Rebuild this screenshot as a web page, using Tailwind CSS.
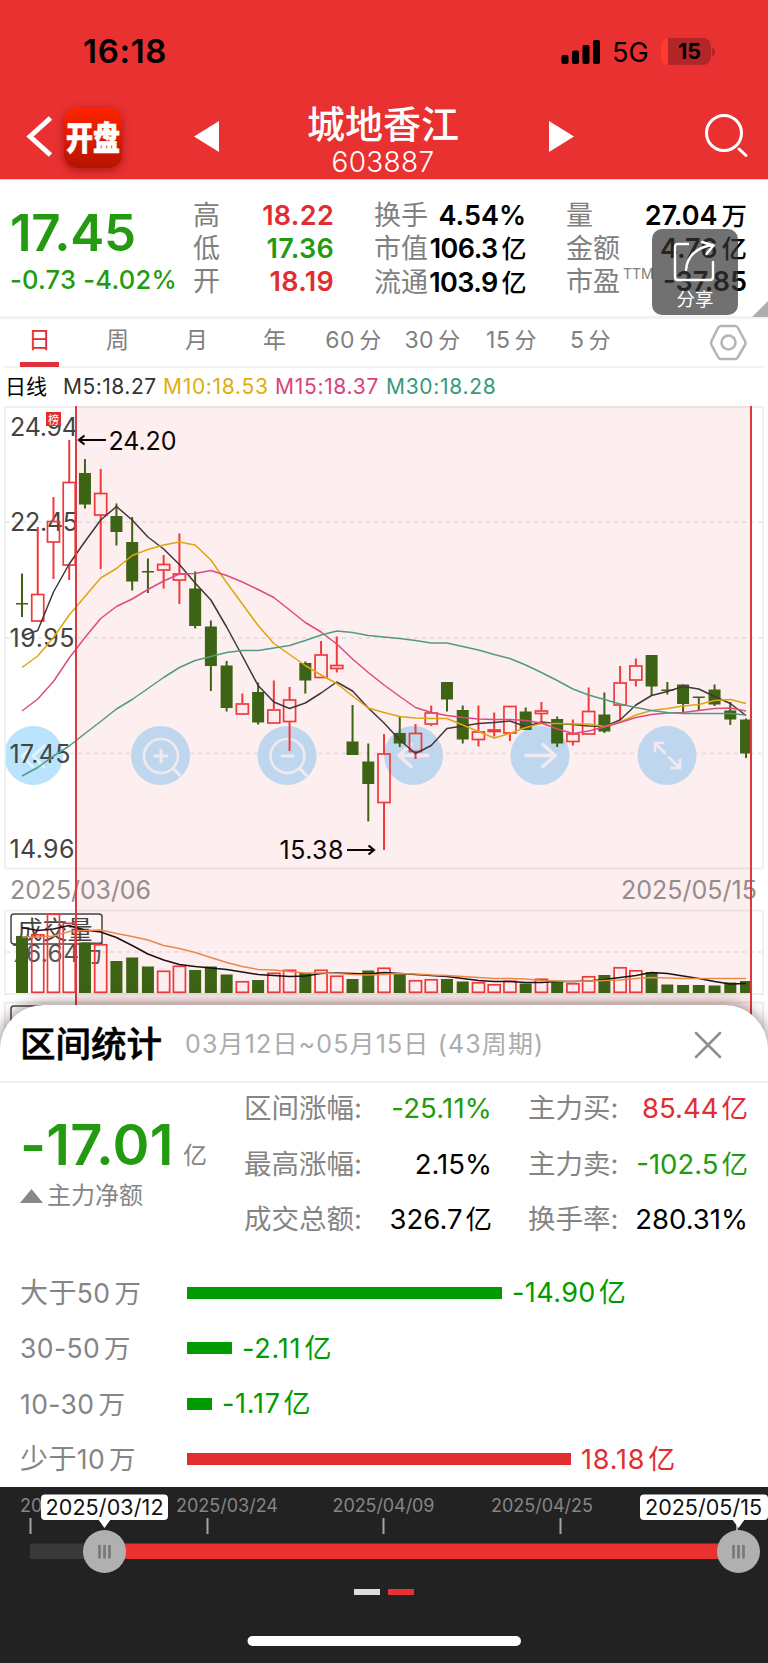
<!DOCTYPE html>
<html lang="zh-CN">
<head>
<meta charset="utf-8">
<title>城地香江 603887</title>
<script src="https://cdn.jsdelivr.net/npm/@tailwindcss/browser@4"></script>
</head>
<body class="w-[768px] h-[1663px] overflow-hidden bg-white font-['Inter','Noto_Sans_CJK_SC',sans-serif] leading-none whitespace-nowrap">
<div class="relative flex h-[1663px] w-[768px] flex-col overflow-hidden">

<!-- header -->
<header class="h-[180px] shrink-0 border-b border-[#f9c9c9] bg-[#e93131]">
  <div class="flex h-[97px] items-start justify-between pl-[83px] pr-[53px]">
    <div class="pt-[36px] text-[33px] font-semibold leading-[31px] tracking-[0.700px] text-black">16:18</div>
    <div class="flex items-center pt-[37px]">
      <svg width="40" height="28" viewBox="0 0 40 28"><g fill="#000"><rect x="1.500" y="17" width="7" height="9" rx="2"/><rect x="12" y="12.500" width="7" height="13.500" rx="2"/><rect x="22.500" y="7" width="7" height="19" rx="2"/><rect x="33" y="2" width="7" height="24" rx="2"/></g></svg>
      <div class="ml-[12px] w-[49px] pt-[2px] text-[27px]">5G</div>
      <div class="flex h-[27px] w-[50px] items-center justify-center overflow-hidden rounded-[8px] bg-[linear-gradient(90deg,#ff3a30_0_7px,#b22627_7px)] pl-[7px] text-[21.500px] font-bold">15</div>
      <div class="ml-[1px] h-[8px] w-[3px] rounded-r-full bg-[#b22627]"></div>
    </div>
  </div>
  <div class="flex h-[82px] items-start">
    <svg class="ml-[24px] mt-[17px]" width="30" height="44" viewBox="0 0 30 44" fill="none" stroke="#fff" stroke-width="5"><path d="M26.500 4L6 22.500L26.500 41"/></svg>
    <div class="ml-[10px] mt-[11px] flex h-[60px] w-[58px] items-center justify-center rounded-[13px] bg-linear-to-b from-[#ff2400] to-[#b41500] shadow-[0_2px_8px_rgba(110,0,0,0.5)]"><span class="scale-y-120 text-[27px] font-black text-white [-webkit-text-stroke:0.6px_white]">开盘</span></div>
    <svg class="ml-[71px] mt-[24px]" width="27" height="31" viewBox="0 0 27 31"><path fill="#fff" d="M1 15.500L26 0V31Z"/></svg>
    <div class="ml-[78px] mt-[8px] flex w-[170px] flex-col items-center text-white">
      <div class="text-[38px] font-medium leading-[38px]">城地香江</div>
      <div class="mt-[4px] text-[28px] leading-[30px] tracking-[0.300px] font-light">603887</div>
    </div>
    <svg class="ml-[80px] mt-[24px]" width="27" height="31" viewBox="0 0 27 31"><path fill="#fff" d="M26 15.500L1 0V31Z"/></svg>
    <svg class="ml-[129px] mt-[15px]" width="46" height="46" viewBox="0 0 46 46" fill="none" stroke="#fff" stroke-width="3" stroke-linecap="round"><circle cx="20" cy="21" r="17.500"/><path d="M35 37L42 43.500"/></svg>
  </div>
</header>

<!-- quote -->
<section class="relative flex h-[136px] shrink-0 pl-[10px] pt-[19px]">
  <div class="w-[183px] text-[#249a10]">
    <div class="mt-[9px] text-[51px] font-semibold leading-[50px] tracking-[-0.200px]">17.45</div>
    <div class="mt-[9px] text-[25.500px] font-medium leading-[26px] tracking-[0.250px]">-0.73 -4.02%</div>
  </div>
  <div class="grid w-[141px] grid-cols-[1fr_auto] content-start text-[27px] leading-[33px] text-[#808080]">
    <span>高</span><b class="text-right font-semibold text-[#e12d2f] tracking-[0.300px]">18.22</b>
    <span>低</span><b class="text-right font-semibold text-[#249a10] tracking-[0.300px]">17.36</b>
    <span>开</span><b class="text-right font-semibold text-[#e12d2f] tracking-[0.300px]">18.19</b>
  </div>
  <div class="ml-[40px] grid w-[152px] grid-cols-[1fr_auto] content-start text-[27px] leading-[33px] text-[#808080]">
    <span class="w-0">换手</span><b class="text-right font-semibold text-black">4.54%</b>
    <span class="w-0">市值</span><b class="text-right font-semibold text-black tracking-[-0.600px]">106.3<i class="pl-[4px] text-[25px] font-medium not-italic">亿</i></b>
    <span class="w-0">流通</span><b class="text-right font-semibold text-black tracking-[-0.600px]">103.9<i class="pl-[4px] text-[25px] font-medium not-italic">亿</i></b>
  </div>
  <div class="ml-[40px] grid w-[181px] grid-cols-[1fr_auto] content-start text-[27px] leading-[33px] text-[#808080]">
    <span class="w-0">量</span><b class="text-right font-semibold text-black">27.04<i class="pl-[4px] text-[25.500px] font-medium not-italic">万</i></b>
    <span class="w-0">金额</span><b class="text-right font-semibold text-black">4.76<i class="pl-[4px] text-[25.500px] font-medium not-italic">亿</i></b>
    <span class="flex w-0 items-start">市盈<small class="pl-[3px] pt-[2px] text-[14px] leading-[14px]">TTM</small></span><b class="text-right font-semibold text-black">-37.85</b>
  </div>
  <div class="absolute left-[652px] top-[49px] flex h-[86px] w-[86px] flex-col items-center rounded-[10px] bg-[#353535]/70 pt-[10px] text-white">
    <svg width="44" height="44" viewBox="0 0 44 44" fill="none" stroke="#fff" stroke-width="2.400" stroke-linecap="round" stroke-linejoin="round"><path d="M15 5H5Q2 5 2 8V38Q2 41 5 41H37Q40 41 40 38V23"/><path d="M13 31C14 17 24 8 40 6M29 3L40.500 6.500L33.500 15"/></svg>
    <div class="mt-[7px] text-[18.500px]">分享</div>
  </div>
  <svg class="absolute right-0 bottom-[-1px]" width="16" height="16" viewBox="0 0 16 16"><path d="M0 16L16 0V16Z" fill="#adadad"/></svg>
</section>
<div class="h-[3px] shrink-0 bg-[#f2f2f2]"></div>

<!-- period tabs -->
<nav class="mx-[4px] flex h-[49px] shrink-0 items-start border-b-2 border-[#f1f1f1] text-[23px] leading-[43px] text-[#808080]">
  <div class="ml-[16px] flex h-[48px] w-[39px] flex-col items-center text-[#e12d2f]"><span class="h-[43px]">日</span><i class="h-[5px] w-full bg-[#dd323b]"></i></div>
  <div class="ml-[39px] w-[39px] text-center">周</div>
  <div class="ml-[40px] w-[39px] text-center">月</div>
  <div class="ml-[39px] w-[39px] text-center">年</div>
  <div class="ml-[20px] w-[79px] text-center tracking-[0.500px]">60<span class="pl-[4px] text-[22px]">分</span></div>
  <div class="w-[79px] text-center tracking-[0.500px]">30<span class="pl-[4px] text-[22px]">分</span></div>
  <div class="w-[79px] text-center tracking-[0.500px]">15<span class="pl-[4px] text-[22px]">分</span></div>
  <div class="w-[79px] text-center tracking-[0.500px]">5<span class="pl-[4px] text-[22px]">分</span></div>
  <svg class="ml-[78px] mt-[4px]" width="40" height="40" viewBox="0 0 40 40" fill="none" stroke="#b5b5b5" stroke-width="2.600" stroke-linejoin="round"><path d="M13 3H27Q29 3 30 5L37 18Q38 20 37 22L30 34Q29 36 27 36H13Q11 36 10 34L3.500 22Q2.500 20 3.500 18L10 5Q11 3 13 3Z"/><circle cx="20.500" cy="19.500" r="7"/></svg>
</nav>

<!-- moving averages -->
<div class="flex h-[32px] shrink-0 items-center pl-[5px] pt-[4px] text-[21px] tracking-[0.700px]">
  <span class="w-[58px] text-[21px] text-black tracking-normal">日线</span>
  <span class="w-[100px] text-[#333] tracking-[0.500px]">M5:18.27</span>
  <span class="w-[112px] text-[#dfae10]">M10:18.53</span>
  <span class="w-[111px] text-[#d9437e]">M15:18.37</span>
  <span class="text-[#37997a]">M30:18.28</span>
</div>

<!-- chart -->
<svg id="chart" class="shrink-0" width="768" height="640" viewBox="0 400 768 640" fill="none">
  <rect x="76" y="406" width="675" height="640" fill="#fdeeef"/>
  <g stroke="#000" stroke-opacity=".06" stroke-width="2"><path d="M5 407H763V868.500H5ZM5 910.500H763V994H5ZM5 1040V1002.500H763V1040"/><path stroke-dasharray="4 4" stroke-opacity=".07" d="M6 522H762M6 638H762M6 753.500H762M6 952H762"/></g>
  <g id="buttons">
    <path fill="#bae3fd" d="M6 745A29.500 29.500 0 1 1 6 766Z"/>
    <g fill="#bfd7ee"><circle cx="160.500" cy="755.500" r="29.500"/><circle cx="287" cy="755.500" r="29.500"/><circle cx="413.500" cy="755.500" r="29.500"/><circle cx="540" cy="755.500" r="29.500"/><circle cx="667" cy="755.500" r="29.500"/></g>
    <g stroke="#f1e9ef" stroke-width="2.600" stroke-linecap="round">
      <path d="M33 746L22 756L33 767M44 746L33 756L44 767" stroke="#e4f4ff"/>
      <circle cx="161" cy="756" r="17"/><path d="M155 756H167M161 750V762" stroke-width="3"/><path d="M173.500 769L180 775.500" stroke-width="3"/>
      <circle cx="287.500" cy="756" r="17"/><path d="M282 756H293M300.500 769L306.500 775.500" stroke-width="3"/>
      <path d="M428 755.500H399M411 744.500L399 755.500L411 766.500" stroke-width="3.500"/>
      <path d="M526 755.500H555M543 744.500L555 755.500L543 766.500" stroke-width="3.500"/>
      <path d="M665 753L655 743M663 743H655V751M669 757.500L680 768M680 759.500V768H671.500"/>
    </g>
  </g>
  <g font-size="25" fill="#444">
    <text x="10" y="436" textLength="68">24.94</text><text x="10" y="531" textLength="68">22.45</text><text x="9.500" y="647" textLength="65">19.95</text><text x="9.500" y="763" textLength="61">17.45</text><text x="9.500" y="857.500" textLength="65">14.96</text>
  </g>
  <g font-size="25" fill="#958c8e"><text x="10" y="899" textLength="141">2025/03/06</text><text x="621" y="899" textLength="136">2025/05/15</text></g>
  <text x="12" y="962" font-size="24.500" fill="#555" textLength="92">76.64万</text>
  <rect x="11" y="914" width="91" height="30" rx="3" fill="#fff" fill-opacity=".35" stroke="#444" stroke-width="1.500"/>
  <text x="17.500" y="938.500" font-size="25" fill="#444">成交量</text>
  <rect x="11" y="1006" width="91" height="30" rx="3" stroke="#444" stroke-width="1.500"/>
  <g id="candles" stroke-width="2"></g>
  <g id="averages" stroke-width="1.500" stroke-linejoin="round"></g>
  <rect x="46" y="412" width="15" height="14" fill="#e12d2f"/><text x="48" y="423.500" font-size="11" fill="#fff">榜</text>
  <path d="M76 406V1040M751 406V1040" stroke="#e0393d" stroke-width="2"/>
  <g font-size="25" fill="#0b0405"><text x="108.500" y="449.500" textLength="68">24.20</text><text x="279.500" y="859" textLength="64">15.38</text></g>
  <path d="M106 440H80M84.500 435.500L79 440L84.500 444.500M347 850H373M368.500 845.500L374 850L368.500 854.500" stroke="#0b0405" stroke-width="2.200"/>
</svg>

<!-- range statistics sheet -->
<section class="relative -mt-[35px] flex h-[482px] shrink-0 flex-col rounded-t-[44px] bg-white shadow-[0_0_16px_rgba(40,0,0,0.55)]">
  <div class="flex h-[78px] shrink-0 items-center border-b-2 border-[#efefef] pl-[20px] pr-[46px] pt-[3px]">
    <h2 class="text-[35.500px] font-medium [-webkit-text-stroke:0.6px_black]">区间统计</h2>
    <div class="ml-[23px] flex-1 text-[25px] tracking-[1.150px] text-[#acacac]">03月12日~05月15日 (43周期)</div>
    <svg width="28" height="28" viewBox="0 0 28 28" stroke="#8f8f8f" stroke-width="2.600" stroke-linecap="round"><path d="M2 2L26 26M26 2L2 26"/></svg>
  </div>
  <div class="flex h-[166px] shrink-0">
    <div class="w-[244px] pl-[20px] text-[24px] text-[#858585]">
      <div class="mt-[34px] flex h-[56px] items-baseline"><span class="w-[163px] text-[56px] font-semibold leading-[56px] tracking-[0.300px] text-[#249a10]">-17.01</span><span class="relative top-[-1px]">亿</span></div>
      <div class="mt-[10px] flex items-center leading-[26px]"><svg width="23" height="14" viewBox="0 0 23 14"><path fill="#888" d="M0 14L11.500 0L23 14Z"/></svg><span class="ml-[4px]">主力净额</span></div>
    </div>
    <div class="-mt-[2px] grid w-[248px] grid-cols-[1fr_auto] content-start text-[27.500px] leading-[55.500px] text-[#858585]">
      <span>区间涨幅:</span><span class="text-right text-[#249a10] tracking-[0.200px]">-25.11%</span>
      <span>最高涨幅:</span><span class="text-right text-black">2.15%</span>
      <span>成交总额:</span><span class="text-right text-black">326.7<i class="pl-[3px] text-[26.500px] not-italic">亿</i></span>
    </div>
    <div class="-mt-[2px] ml-[36px] grid w-[220px] grid-cols-[1fr_auto] content-start text-[27.500px] leading-[55.500px] text-[#858585]">
      <span>主力买:</span><span class="text-right text-[#e12d2f]">85.44<i class="pl-[3px] text-[26.500px] not-italic">亿</i></span>
      <span>主力卖:</span><span class="text-right text-[#249a10]">-102.5<i class="pl-[3px] text-[26.500px] not-italic">亿</i></span>
      <span>换手率:</span><span class="text-right text-black">280.31%</span>
    </div>
  </div>
  <div class="mt-[16px] flex flex-col pl-[20px] text-[26.500px] tracking-[0.400px] text-[#858585]">
    <div class="flex h-[55.500px] items-center"><span class="w-[167px]"><i class="text-[28px] not-italic">大于</i>50<i class="pl-[4px] not-italic">万</i></span><i class="h-[12px] w-[315px] bg-[#009b00]"></i><span class="ml-[10px] text-[27px] text-[#009b00]">-14.90<i class="pl-[3px] text-[27px] not-italic">亿</i></span></div>
    <div class="flex h-[55.500px] items-center"><span class="w-[167px]">30-50<i class="pl-[4px] not-italic">万</i></span><i class="h-[12px] w-[45px] bg-[#009b00]"></i><span class="ml-[10px] text-[27px] tracking-[0.800px] text-[#009b00]">-2.11<i class="pl-[3px] text-[27px] not-italic">亿</i></span></div>
    <div class="flex h-[55.500px] items-center"><span class="w-[167px]">10-30<i class="pl-[4px] not-italic">万</i></span><i class="h-[12px] w-[25px] bg-[#009b00]"></i><span class="ml-[10px] text-[27px] tracking-[0.700px] text-[#009b00]">-1.17<i class="pl-[3px] text-[27px] not-italic">亿</i></span></div>
    <div class="flex h-[55.500px] items-center"><span class="w-[167px]"><i class="text-[28px] not-italic">少于</i>10<i class="pl-[4px] not-italic">万</i></span><i class="h-[12px] w-[384px] bg-[#e12d2f]"></i><span class="ml-[10px] text-[27px] tracking-[0.800px] text-[#e12d2f]">18.18<i class="pl-[3px] text-[27px] not-italic">亿</i></span></div>
  </div>
</section>

<!-- range slider -->
<svg class="relative shrink-0 bg-[#222]" width="768" height="176" viewBox="0 1487 768 176">
  <g font-size="18" fill="#858585"><text x="20" y="1512" textLength="102">2025/03/06</text><text x="176" y="1512" textLength="102">2025/03/24</text><text x="332.500" y="1512" textLength="102">2025/04/09</text><text x="491" y="1512" textLength="102">2025/04/25</text></g>
  <path d="M30.500 1518V1534M207.500 1518V1534M383.500 1518V1534M560.500 1518V1534M737 1518V1534" stroke="#a3a3a3" stroke-width="2"/>
  <path fill="#393939" d="M30 1543.500H105V1559H30Z"/><path fill="#e93131" d="M105 1543.500H738V1559H105Z"/>
  <g fill="#fff"><rect x="41" y="1494.500" width="127" height="25.500" rx="4"/><path d="M98 1519H111L104.500 1528Z"/><rect x="640" y="1494.500" width="128" height="25.500" rx="4"/><path d="M732 1519H745L738.500 1528Z"/></g>
  <g font-size="21.500" fill="#111"><text x="45.500" y="1515" textLength="118">2025/03/12</text><text x="645" y="1515" textLength="117">2025/05/15</text></g>
  <g fill="#b0b0b0"><circle cx="104.500" cy="1551.500" r="21.500"/><circle cx="738.500" cy="1551.500" r="21.500"/></g>
  <path d="M99.500 1546V1557.500M104.500 1546V1557.500M109.500 1546V1557.500M733.500 1546V1557.500M738.500 1546V1557.500M743.500 1546V1557.500" stroke="#777" stroke-width="2.600" stroke-linecap="round"/>
  <rect x="354" y="1589" width="26" height="6" fill="#ddd"/><rect x="388" y="1589" width="26" height="6" fill="#e93131"/>
  <rect x="247.500" y="1636" width="273.500" height="10" rx="5" fill="#fff"/>
</svg>
</div>

<script>
// kind (g: falling, r: rising), high, top, bottom, low, volume top
const days = [
['g',573.5,603,604.5,617,936],['r',527,594,621.5,621.5,934],['r',497,521,542.5,579,913.5],['r',440,482,565.5,580,922.5],['g',459,473,504.5,508.5,942.5],['r',469,493,515.5,569,944],
['g',503.5,516,532,545.5,961],['g',517,542,581.5,590.5,957.5],['g',558.5,571,572.5,593,966.5],['r',555,564,570.5,588.5,970.5],['r',533.5,573.5,580.5,604,965.5],['g',571.5,588.5,626,628.5,970],
['g',620.5,626.5,666,691,966.5],['g',661,665.5,708,711.5,974.5],['r',693.5,703.5,714.5,714.5,981],['g',682.5,692,722.5,724.5,980],['r',680.5,709.5,723.5,723.5,972.5],['r',687,699.5,722,751,969.5],
['g',661.5,663,680.5,693.5,973],['r',641,654.5,678,678,969.5],['r',636.5,665,669,672.5,975.5],['g',705,741.5,755,755,979],['g',743.5,761.5,784,821.5,970.5],['r',734,753.5,803,850,967.5],
['g',717,733,743.5,747,974],['r',724,733,752,759,980],['r',705.5,712.5,724.5,726,979],['g',682,682,699.5,711.5,979],['g',705.5,710,739.5,743.5,981.5],['r',705.5,731.5,740,746.5,982],
['r',712.5,729.5,732,736.5,984],['r',706,706,733.5,741,980.5],['g',707.5,711.5,730,730,983.5],['r',702,710.5,714,721.5,978.5],['g',716.5,719,743.5,747,982],['r',719.5,733.5,742,745.5,983],
['r',687.5,711,734.5,734.5,976],['g',692.5,714.5,731.5,733,975],['r',666,682.5,705.5,720,967],['r',658.5,665.5,680.5,686.5,970],['g',655,655,686.5,696,972],['g',682,689.5,691,694.5,984.5],
['g',684.5,684.5,704,712,985],['g',697,696.5,698,710.5,985],['g',684.5,689.5,704.5,706,985.5],['g',702,710.5,719.5,725,982.5],['g',718.5,719.5,753.5,758,981]];
const lines = [
['#42363a',[636,630.5,592,564,541.5,520,506.5,520,537,549,564.5,583,600,627,656,685.5,702,708.5,703,693,682,691,708,723,740,753.5,745.5,728.5,726,723.5,722.5,721,726.5,722,723.5,724.5,726,726.5,720,705,695.5,691.5,686.5,689,696.5,703.5,715.5]],
['#dfa510',[667.5,656,637.5,615,596.5,578,568.5,555.5,549.5,545,542,545,560,582.5,604,625.5,643.5,654.5,665.5,675,683.5,696,708,712.5,716.5,718,718.5,718.5,725,731.5,738,733.5,727.5,723.5,723.5,724,724,726.5,722,715,710.5,708.5,706,704.5,700.5,699.5,703.5]],
['#dd4a86',[711,699,681.5,658,637.5,618.5,606.5,599,589.5,581,574,573.5,570.5,575.5,582,589.5,597.5,610,622.5,632,644,659,672.5,685,696.5,707.5,712.5,715.5,717.5,719,719.5,719.5,720.5,723,729,733.5,731,727,722.5,717.5,714.5,713,712.5,710.5,708.5,708,711]],
['#4f9c82',[776,767.5,756,746,733.5,721.5,709,699.5,688.5,677.5,667.5,660.5,656.5,652.5,650.5,650.5,648,645.5,640.5,635,631,632.5,635.5,637,638.5,640.5,643,643,646.5,650,654.5,658.5,665,672.5,680.5,689,695,699.5,704,707.5,710.5,712.5,713.5,713.5,713.5,713.5,715]],
['#1c1014',[927.5,930.5,929,925.5,930,932,937.5,945.5,954,960,964.5,966.5,968,969.5,972,974.5,975.5,976.5,976,973.5,973,973.5,974,972.5,973.5,974.5,975.5,976.5,978.5,980.5,981.5,981.5,982.5,982.5,981.5,981.5,981,979.5,977.5,975.5,972.5,973.5,976,978.5,981.5,984,983.5]],
['#ea8a48',[937,937,936,931.5,930.5,930,933.5,936.5,940,945.5,948.5,952.5,957.5,962.5,966.5,969.5,970,971.5,973,973,973.5,974.5,975,974.5,973.5,974,975,975.5,976.5,977.5,978.5,978.5,979,980.5,981,981.5,981,980.5,980,978.5,977.5,978,978.5,978.5,978.5,978.5,978.5]]];
const X = i => 22 + 15.74 * i;
let out = '';
days.forEach(([k, hi, top, bot, lo, vol], i) => {
  const x = X(i);
  if (k === 'g') {
    out += `<path stroke="#3d6415" d="M${x} ${hi}V${lo}"/><rect x="${x - 6}" y="${top}" width="12" height="${bot - top}" fill="#3d6415"/><rect x="${x - 6}" y="${vol}" width="12" height="${993 - vol}" fill="#3d6415"/>`;
  } else {
    out += `<path stroke="#ef3a3c" d="M${x} ${hi}V${top}M${x} ${bot}V${lo}"/><rect stroke="#ef3a3c" stroke-width="1.700" x="${x - 6}" y="${top + .5}" width="12" height="${Math.max(bot - top - 1, 1)}"/><rect stroke="#ef3a3c" stroke-width="1.700" x="${x - 6}" y="${vol + .8}" width="12" height="${991.500 - vol}"/>`;
  }
});
document.getElementById('candles').innerHTML = out;
document.getElementById('averages').innerHTML = lines.map(([c, ys]) => `<polyline stroke="${c}" points="${ys.map((y, i) => X(i) + ',' + y).join(' ')}"/>`).join('');
</script>
</body>
</html>
